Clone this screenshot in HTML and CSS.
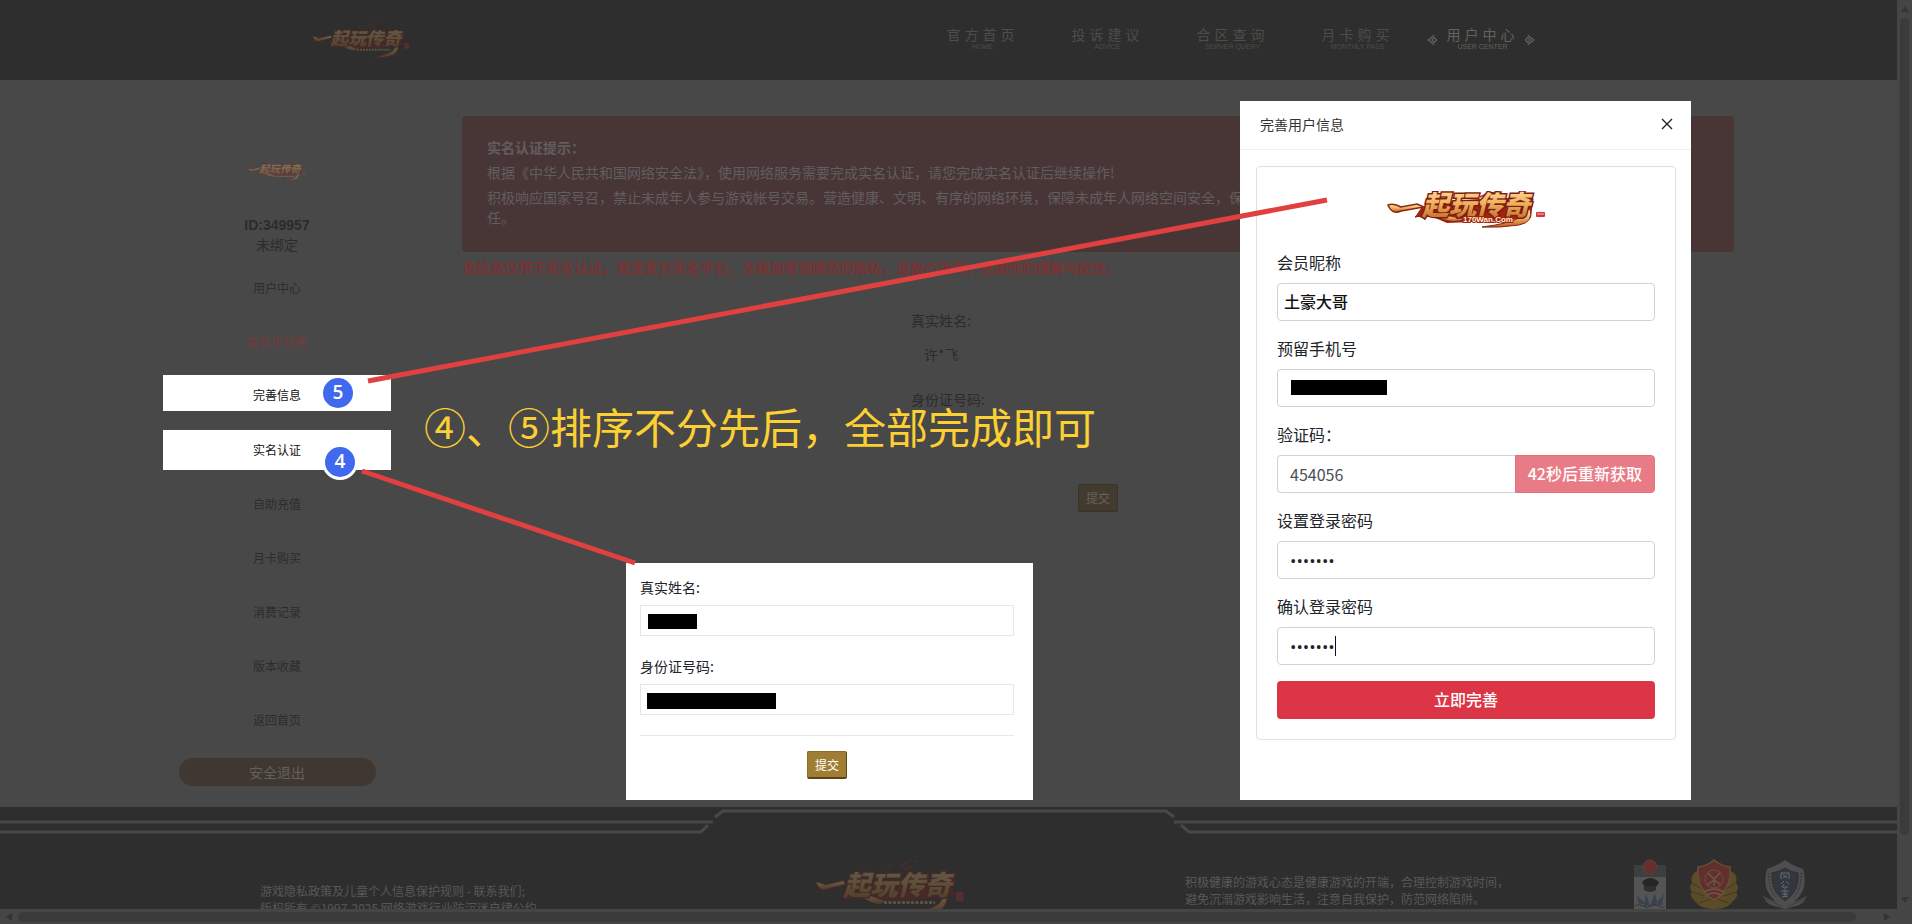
FILE: index.html
```html
<!DOCTYPE html>
<html lang="zh-CN">
<head>
    <meta charset="utf-8">
    <title>用户中心 - 一起玩传奇</title>
    <link rel="stylesheet" href="styles.css">
</head>
<body>
    <svg class="defs" aria-hidden="true">
        <defs>
            <linearGradient id="gold" x1="0" y1="0" x2="0" y2="1">
                <stop offset="0" stop-color="#ffe9b0"/>
                <stop offset="0.5" stop-color="#efb25e"/>
                <stop offset="1" stop-color="#b85c22"/>
            </linearGradient>
        </defs>
        <symbol id="logo" viewBox="0 0 100 38">
            <path d="M20 20 L40 17 L90 14 L93 24 L70 27 L42 28 Q32 26 20 26Z" fill="#8c1f14"/>
            <path d="M0 15 Q4 15 7 17 L19 14 L21 17 L9 20 Q3 23 0 15Z" fill="url(#gold)" stroke="#7c1d10"/>
            <path d="M18 25 Q28 23 36 28 Q44 32 46 28 L30 22Z" fill="url(#gold)"/>
            <path d="M88 22 Q90 34 78 36 Q70 38 62 37 Q76 34 82 30Z" fill="url(#gold)" stroke="#7c1d10"/>
            <path d="M48 6l3-2M57 5l6-4M66 2l2-1M60 7l5-2" stroke="#c2211d" stroke-width="1"/>
            <text class="logo-text logo-text-small" x="19" y="24">起玩传奇</text>
            <path d="M46 29h34" stroke="#e9b67c" stroke-width="2" stroke-dasharray="2 1"/>
            <rect x="94" y="22" width="5" height="6" rx="1" fill="#c8342c"/>
        </symbol>
        <symbol id="logo-wide" viewBox="0 0 158 38">
            <path d="M34 17 L66 10 L106 7 L146 10 L144 27 L110 30 L60 32 L46 26 L28 26Z" fill="#a32213"/>
            <path d="M1 14 Q7 12 14 16 L30 13 L37 16 L14 20 Q5 24 1 14Z" fill="url(#gold)" stroke="#8b2413" stroke-width="1.5"/>
            <path d="M28 26 Q42 22 55 28 Q68 33 78 28 L48 22Z" fill="url(#gold)" stroke="#8b2413"/>
            <path d="M143 18 Q147 31 132 34 Q112 37 95 36 Q120 33 132 27 L136 20Z" fill="url(#gold)" stroke="#8b2413"/>
            <path d="M72 6l6-3M80 7l5-2M93 6l10-5M105 2l4-1M103 6l6-3" stroke="#d92c2a" stroke-width="1.5"/>
            <text class="logo-text logo-text-wide" x="35" y="24">起玩传奇</text>
            <text class="logo-domain" x="76" y="31">170Wan.Com</text>
            <rect x="149" y="21" width="9" height="5" rx="1" fill="#d8323a"/>
            <path d="M150 23h7" stroke="#fff" stroke-width="0.7"/>
        </symbol>
    </svg>

    <div class="page">
        <header class="header">
            <svg class="header-logo" role="img" aria-label="一起玩传奇"><use href="#logo"/></svg>
            <nav class="nav">
                <a class="nav-item" href="#">官方首页<small>HOME</small></a>
                <a class="nav-item" href="#">投诉建议<small>ADVICE</small></a>
                <a class="nav-item" href="#">合区查询<small>SERVER QUERY</small></a>
                <a class="nav-item" href="#">月卡购买<small>MONTHLY PASS</small></a>
                <a class="nav-item active" href="#">用户中心<small>USER CENTER</small>
                    <svg class="nav-mark left" viewBox="0 0 10 10"><path d="M6 1L1 5l5 4M4 5l2-2 2 2-2 2z"/></svg>
                    <svg class="nav-mark right" viewBox="0 0 10 10"><path d="M4 1l5 4-5 4M2 5l2-2 2 2-2 2z"/></svg>
                </a>
            </nav>
        </header>

        <div class="wrap">
            <aside class="sidebar">
                <svg class="avatar" role="img" aria-label="一起玩传奇"><use href="#logo"/></svg>
                <div class="user-id">ID:349957</div>
                <div class="user-bind">未绑定</div>
                <ul class="menu">
                    <li><a href="#">用户中心</a></li>
                    <li><a class="red" href="#">会员币兑换</a></li>
                    <li><a class="lit lit-info" href="#">完善信息</a></li>
                    <li><a class="lit lit-real" href="#">实名认证</a></li>
                    <li><a href="#">自助充值</a></li>
                    <li><a href="#">月卡购买</a></li>
                    <li><a href="#">消费记录</a></li>
                    <li><a href="#">版本收藏</a></li>
                    <li><a href="#">返回首页</a></li>
                </ul>
                <button class="logout" type="button">安全退出</button>
            </aside>

            <main class="main">
                <div class="alert">
                    <p><b>实名认证提示：</b></p>
                    <p>根据《中华人民共和国网络安全法》，使用网络服务需要完成实名认证，请您完成实名认证后继续操作!</p>
                    <p>积极响应国家号召，禁止未成年人参与游戏帐号交易。营造健康、文明、有序的网络环境，保障未成年人网络空间安全，保护未成年人合法权益，共同承担社会责<br>任。</p>
                </div>
                <p class="notice">该信息仅用于实名认证，直连官方实名平台，全程加密保障您的隐私，请放心填写，感谢你的理解与配合。</p>
                <form class="real-form dim">
                    <div class="field">
                        <label for="name">真实姓名:</label>
                        <input id="name" type="text" value="许*飞">
                    </div>
                    <div class="field">
                        <label for="idcard">身份证号码:</label>
                        <input id="idcard" type="text">
                    </div>
                    <hr>
                    <button type="button">提交</button>
                </form>
            </main>
        </div>

        <footer class="footer">
            <svg class="footer-line" viewBox="0 0 1897 36" preserveAspectRatio="none">
                <path d="M0 15H713M0 25H701L708 18M715 10L723 4H1166L1174 10M1174 15H1897M1181 18L1189 25H1897"/>
            </svg>
            <div class="footer-inner">
                <div class="copyright">游戏隐私政策及儿童个人信息保护规则 - 联系我们;<br>版权所有 ©1997-2025 网络游戏行业防沉迷自律公约</div>
                <svg class="footer-logo" role="img" aria-label="一起玩传奇"><use href="#logo"/></svg>
                <div class="health">积极健康的游戏心态是健康游戏的开端，合理控制游戏时间，<br>避免沉溺游戏影响生活，注意自我保护，防范网络陷阱。</div>
                <div class="badges">
                    <svg width="32" height="50" viewBox="0 0 32 50">
                        <path d="M0 6h32v44H0z" fill="#9c9c9c"/>
                        <path d="M0 6h32v12H0z" fill="#5d5d5d"/>
                        <circle cx="16" cy="8" r="7" fill="#d3302c" stroke="#777"/>
                        <path d="M8 23q8-8 17 0l-2 4H10z" fill="#191919"/>
                        <path d="M10 27h12v4q-6 4-12 0z" fill="#333"/>
                        <path d="M2 36l10 9H5zM30 35l-9 11h7zM12 34l4 13 5-13 3 13H10z" fill="#4f6788"/>
                        <path d="M1 47q4-3 8 0t8 0 8 0 6 0" fill="none" stroke="#445" />
                    </svg>
                    <svg width="50" height="50" viewBox="0 0 50 50">
                        <path d="M8 12Q1 15 3 24Q-1 28 3 33Q-1 36 7 43Q11 50 25 50T43 43Q51 36 47 33Q51 28 47 24Q49 15 42 12L25 40Z" fill="#b08420"/>
                        <path d="M3 24l10 6M3 33l12 4M47 24l-10 6M47 33l-12 4M10 44l15-5 15 5" stroke="#6d4c14" fill="none"/>
                        <path d="M25 1Q32 7 41 8Q43 31 25 41Q7 31 9 8Q18 7 25 1Z" fill="#c1352b" stroke="#cf8f3c" stroke-width="1.5"/>
                        <circle cx="25" cy="20" r="9" fill="none" stroke="#d58a67"/>
                        <path d="M19 14l6 6 6-6M25 20v7M18 26l7-5 7 5M15 33q10-6 20 0M18 36q7-4 14 0" fill="none" stroke="#e3a074" stroke-width="1.5"/>
                    </svg>
                    <svg width="46" height="50" viewBox="0 0 46 50">
                        <path d="M23 1Q31 7 41 10Q47 31 32 43L45 37Q42 45 34 47L23 50L12 47Q4 45 1 37L14 43Q-1 31 5 10Q15 7 23 1Z" fill="#8b8b8b"/>
                        <path d="M23 9Q29 13 36 14Q38 32 23 42Q8 32 10 14Q17 13 23 9Z" fill="#3a4860" stroke="#333"/>
                        <path d="M7 14q-1 16 8 25M39 14q1 16-8 25M2 39l19 9M44 39l-19 9" fill="none" stroke="#3e3e3e" stroke-dasharray="2 1"/>
                        <path d="M19 20v-6h8v6M21 16l4 3M25 16l-4 3M22 22l-3 3M24 22l3 3M22 25l-2 3h6M23 29v2M19 32h8M20 35h6M23 32v6M20 38l6-1" fill="none" stroke="#ddd"/>
                    </svg>
                </div>
            </div>
        </footer>
    </div>
    <div class="scroll-y"><i class="arrow up"></i><i class="thumb"></i><i class="arrow down"></i></div>
    <div class="scroll-x"><i class="arrow prev"></i><i class="thumb"></i><i class="arrow next"></i></div>

    <!-- 实名认证 -->
    <section class="real-box">
        <form class="real-form">
            <div class="field">
                <label for="name2">真实姓名:</label>
                <div class="masked"><input id="name2" type="text"><span class="mask mask-name"></span></div>
            </div>
            <div class="field">
                <label for="idcard2">身份证号码:</label>
                <div class="masked"><input id="idcard2" type="text"><span class="mask mask-id"></span></div>
            </div>
            <hr>
            <button type="button">提交</button>
        </form>
    </section>

    <!-- 完善用户信息 -->
    <section class="modal" role="dialog" aria-labelledby="modal-title">
        <div class="modal-header">
            <span id="modal-title">完善用户信息</span>
            <button class="close" type="button" aria-label="关闭">
                <svg width="12" height="12" viewBox="0 0 12 12"><path d="M1 1l10 10M11 1L1 11"/></svg>
            </button>
        </div>
        <form class="card">
            <svg class="card-logo" role="img" aria-label="一起玩传奇"><use href="#logo-wide"/></svg>
            <div class="form-group">
                <label for="nick">会员昵称</label>
                <input class="form-control nick" id="nick" type="text" value="土豪大哥">
            </div>
            <div class="form-group">
                <label for="phone">预留手机号</label>
                <div class="masked"><input class="form-control" id="phone" type="text"><span class="mask mask-phone"></span></div>
            </div>
            <div class="form-group">
                <label for="code">验证码：</label>
                <div class="input-group">
                    <input class="form-control" id="code" type="text" value="454056">
                    <button class="btn-code" type="button">42秒后重新获取</button>
                </div>
            </div>
            <div class="form-group">
                <label for="pwd">设置登录密码</label>
                <input class="form-control pwd" id="pwd" type="password" value="1234567">
            </div>
            <div class="form-group">
                <label for="pwd2">确认登录密码</label>
                <div class="masked"><input class="form-control pwd" id="pwd2" type="password" value="1234567"><span class="caret"></span></div>
            </div>
            <button class="btn-submit" type="button">立即完善</button>
        </form>
    </section>

    <!-- 步骤标注 -->
    <svg class="lines" aria-hidden="true">
        <path d="M368 381L1327 200M362 471L635 563"/>
    </svg>
    <span class="step step-5">5</span>
    <span class="step step-4">4</span>
    <p class="tip">④、⑤排序不分先后，全部完成即可</p>
</body>
</html>
```
FILE: styles.css
```css
* {
    box-sizing: border-box;
}
body {
    margin: 0;
    height: 100vh;
    display: grid;
    grid-template-columns: 1fr 15px;
    grid-template-rows: 1fr 15px;
    position: relative;
    overflow: hidden;
    background: #484848;
    font-family: "Noto Sans CJK SC", "Noto Sans", sans-serif;
    font-size: 14px;
    line-height: 20px;
    color: #212529;
}
p, ul {
    margin: 0;
    padding: 0;
    list-style: none;
}
a {
    color: inherit;
    text-decoration: none;
}
button, input {
    font-family: inherit;
}
.defs {
    position: absolute;
    width: 0;
    height: 0;
}
.page {
    min-height: 0;
    overflow: hidden;
}

/* logo */
.logo-text {
    font-weight: 900;
    font-style: italic;
    fill: url(#gold);
    stroke: #7c1d10;
    stroke-width: 2;
    paint-order: stroke;
}
.logo-text-small {
    font-size: 18px;
}
.logo-text-wide {
    font-size: 27px;
    stroke-width: 3px;
}
.logo-domain {
    font-family: "Liberation Sans", sans-serif;
    font-weight: bold;
    font-size: 8px;
    fill: #fff3c8;
    stroke: #a32213;
    stroke-width: 2;
    paint-order: stroke;
}

/* header */
.header {
    height: 80px;
    padding: 0 352px 0 312px;
    display: flex;
    align-items: center;
    justify-content: space-between;
    background: #2e2e2e;
}
.header-logo {
    width: 98px;
    height: 38px;
    opacity: 0.25;
}
.nav {
    display: flex;
    padding-bottom: 4px;
}
.nav-item {
    position: relative;
    width: 125px;
    text-align: center;
    letter-spacing: 4px;
    color: #504c48;
    line-height: 18px;
}
.nav-item small {
    display: block;
    font: 7px/8px "Liberation Sans", sans-serif;
    letter-spacing: normal;
}
.nav-item.active {
    color: #66615b;
}
.nav-mark {
    position: absolute;
    top: 9px;
    width: 12px;
    height: 12px;
    fill: none;
    stroke: #66615b;
}
.nav-mark.left {
    left: 7px;
}
.nav-mark.right {
    right: 10px;
}

/* content */
.wrap {
    display: flex;
    gap: 71px;
    padding: 36px 163px 21px;
    background: #484848;
}
.sidebar {
    width: 228px;
    text-align: center;
    color: #2c2c2c;
}
.avatar {
    display: block;
    width: 58px;
    height: 27px;
    margin: 41px auto 31px;
    opacity: 0.3;
}
.user-id {
    font-family: "Liberation Sans", sans-serif;
    font-weight: bold;
}
.user-bind {
    line-height: 18px;
}
.menu {
    margin-top: 8px;
    font-size: 12px;
}
.menu li {
    height: 54px;
    display: flex;
    align-items: center;
}
.menu a {
    display: flex;
    align-items: center;
    justify-content: center;
    width: 100%;
}
.menu .red {
    color: #783a3a;
}
.menu .lit {
    background: #fff;
    color: #111;
}
.menu .lit-info {
    height: 36px;
    padding-top: 4px;
    margin-bottom: 6px;
}
.menu .lit-real {
    height: 40px;
}
.logout {
    width: 197px;
    height: 28px;
    margin-top: 11px;
    padding: 0;
    border: 0;
    border-radius: 14px;
    background: #403830;
    color: #606060;
    font-size: 14px;
}
.main {
    flex: 1;
}
.alert {
    padding: 21px 25px 25px;
    border-radius: 4px;
    background: #483637;
    color: #625d5f;
}
.alert p + p {
    margin-top: 5px;
}
.notice {
    margin: 5px 0 33px;
    font-weight: bold;
    color: #783334;
}

/* 实名表单 */
.real-form {
    max-width: 374px;
    margin: 0 auto;
    text-align: center;
}
.real-form .field {
    margin-bottom: 20px;
    text-align: left;
}
.real-form label {
    display: block;
    margin-bottom: 8px;
}
.real-form input {
    display: block;
    width: 100%;
    height: 31px;
    padding: 0 12px;
    border: 1px solid #e6e6e6;
    background: #fff;
    font-size: 14px;
}
.real-form hr {
    margin: 0 0 15px;
    border: 0;
    border-top: 1px solid #e9e9e9;
}
.real-form button {
    width: 40px;
    height: 28px;
    padding: 0;
    border: 1px solid #8c6d2a;
    border-right-color: #5b4517;
    border-bottom: 2px solid #5b4517;
    border-radius: 2px;
    background: #9f7d33;
    color: #fff;
    font-size: 12px;
}
.real-form.dim {
    color: #2c2c2c;
}
.real-form.dim input {
    border-color: #484848;
    background: #484848;
    color: #2c2c2c;
}
.real-form.dim hr {
    border-color: #484848;
}
.real-form.dim button {
    border-color: #3a342a;
    background: #433b2e;
    color: #66625b;
}
.masked {
    position: relative;
}
.mask {
    position: absolute;
    background: #000;
}
.mask-name {
    left: 8px;
    top: 9px;
    width: 49px;
    height: 15px;
}
.mask-id {
    left: 7px;
    top: 9px;
    width: 129px;
    height: 16px;
}
.mask-phone {
    left: 14px;
    top: 11px;
    width: 96px;
    height: 15px;
}
.real-box {
    position: absolute;
    left: 626px;
    top: 563px;
    width: 407px;
    padding: 14px 19px 21px 14px;
    background: #fff;
}

/* footer */
.footer {
    background: #2e2e2e;
    color: #585858;
    font-size: 12px;
    line-height: 17px;
}
.footer-line {
    display: block;
    width: 100%;
    height: 36px;
    fill: none;
    stroke: #484848;
    stroke-width: 3;
}
.footer-inner {
    display: grid;
    grid-template-columns: 555px 370px 449px auto;
    align-items: start;
    height: 120px;
    padding: 16px 80px 0 260px;
}
.copyright {
    padding-top: 23px;
}
.footer-logo {
    width: 150px;
    height: 57px;
    opacity: 0.25;
}
.health {
    padding-top: 14px;
}
.badges {
    display: flex;
    gap: 23px;
    opacity: 0.35;
}

/* scrollbars */
.scroll-y, .scroll-x {
    display: flex;
    align-items: center;
    background: #454545;
}
.scroll-y {
    flex-direction: column;
    padding: 6px 0;
    gap: 6px;
}
.scroll-x {
    grid-column: 1 / 3;
    padding: 0 22px 0 6px;
    gap: 6px;
}
.thumb {
    flex: 1;
    border-radius: 6px;
    background: #3b3b3b;
}
.scroll-y .thumb {
    width: 9px;
    margin-bottom: 56px;
}
.scroll-x .thumb {
    height: 10px;
    margin-right: 22px;
}
.arrow {
    border: 4px solid transparent;
}
.arrow.up {
    border-top: 0;
    border-bottom: 6px solid #353535;
}
.arrow.down {
    border-bottom: 0;
    border-top: 6px solid #353535;
}
.arrow.prev {
    border-left: 0;
    border-right: 6px solid #333;
}
.arrow.next {
    border-right: 0;
    border-left: 6px solid #333;
}

/* modal */
.modal {
    position: absolute;
    left: 1240px;
    top: 101px;
    width: 451px;
    padding-bottom: 60px;
    background: #fff;
}
.modal-header {
    display: flex;
    align-items: center;
    justify-content: space-between;
    height: 49px;
    padding: 0 18px 2px 20px;
    border-bottom: 1px solid #eee;
    color: #333;
}
.close {
    display: flex;
    padding: 0;
    border: 0;
    background: none;
}
.close path {
    stroke: #222;
    stroke-width: 1.4;
}
.card {
    margin: 16px 15px 0 16px;
    padding: 19px 20px 20px;
    border: 1px solid #e0e0e0;
    border-radius: 4px;
    font-size: 16px;
    line-height: 24px;
}
.card-logo {
    display: block;
    width: 158px;
    height: 38px;
    margin: 5px auto 21px;
}
.form-group {
    margin-bottom: 15px;
}
.form-group label {
    display: block;
    margin-bottom: 9px;
}
.form-group:last-of-type {
    margin-bottom: 16px;
}
.form-control {
    display: block;
    width: 100%;
    height: 38px;
    padding: 6px 12px;
    border: 1px solid #d0d3d6;
    border-radius: 4px;
    background: #fff;
    color: #495057;
    font-size: 16px;
}
.nick {
    padding: 4px 6px 6px;
    font-weight: 500;
    color: #111;
}
.pwd {
    font-family: "Open Sans", sans-serif;
    font-size: 17px;
    color: #222;
}
.caret {
    position: absolute;
    left: 58px;
    top: 9px;
    width: 1px;
    height: 20px;
    background: #111;
}
.input-group {
    display: flex;
}
.input-group .form-control {
    flex: 1;
    min-width: 0;
    border-right: 0;
    border-radius: 4px 0 0 4px;
}
.btn-code {
    padding: 0 12px 2px;
    border: 1px solid #e4707c;
    border-radius: 0 4px 4px 0;
    background: #e87b86;
    color: #fff;
    font-size: 16px;
    font-weight: 500;
}
.btn-submit {
    display: block;
    width: 100%;
    height: 38px;
    padding: 0 0 2px;
    border: 0;
    border-radius: 4px;
    background: #dc3545;
    color: #fff;
    font-size: 16px;
    font-weight: 500;
}

/* 标注 */
.lines {
    position: absolute;
    left: 0;
    top: 0;
    width: 100%;
    height: 100%;
    fill: none;
    stroke: #e04040;
    stroke-width: 5;
    pointer-events: none;
}
.step {
    position: absolute;
    width: 36px;
    height: 36px;
    border: 3px solid #fff;
    border-radius: 50%;
    background: #4169f0;
    color: #fff;
    font: 600 19px/29px "Open Sans", sans-serif;
    text-align: center;
}
.step-5 {
    left: 320px;
    top: 375px;
}
.step-4 {
    left: 322px;
    top: 444px;
}
.tip {
    position: absolute;
    left: 424px;
    top: 396px;
    font-size: 42px;
    line-height: 60px;
    color: #fccf32;
    white-space: nowrap;
}
```
